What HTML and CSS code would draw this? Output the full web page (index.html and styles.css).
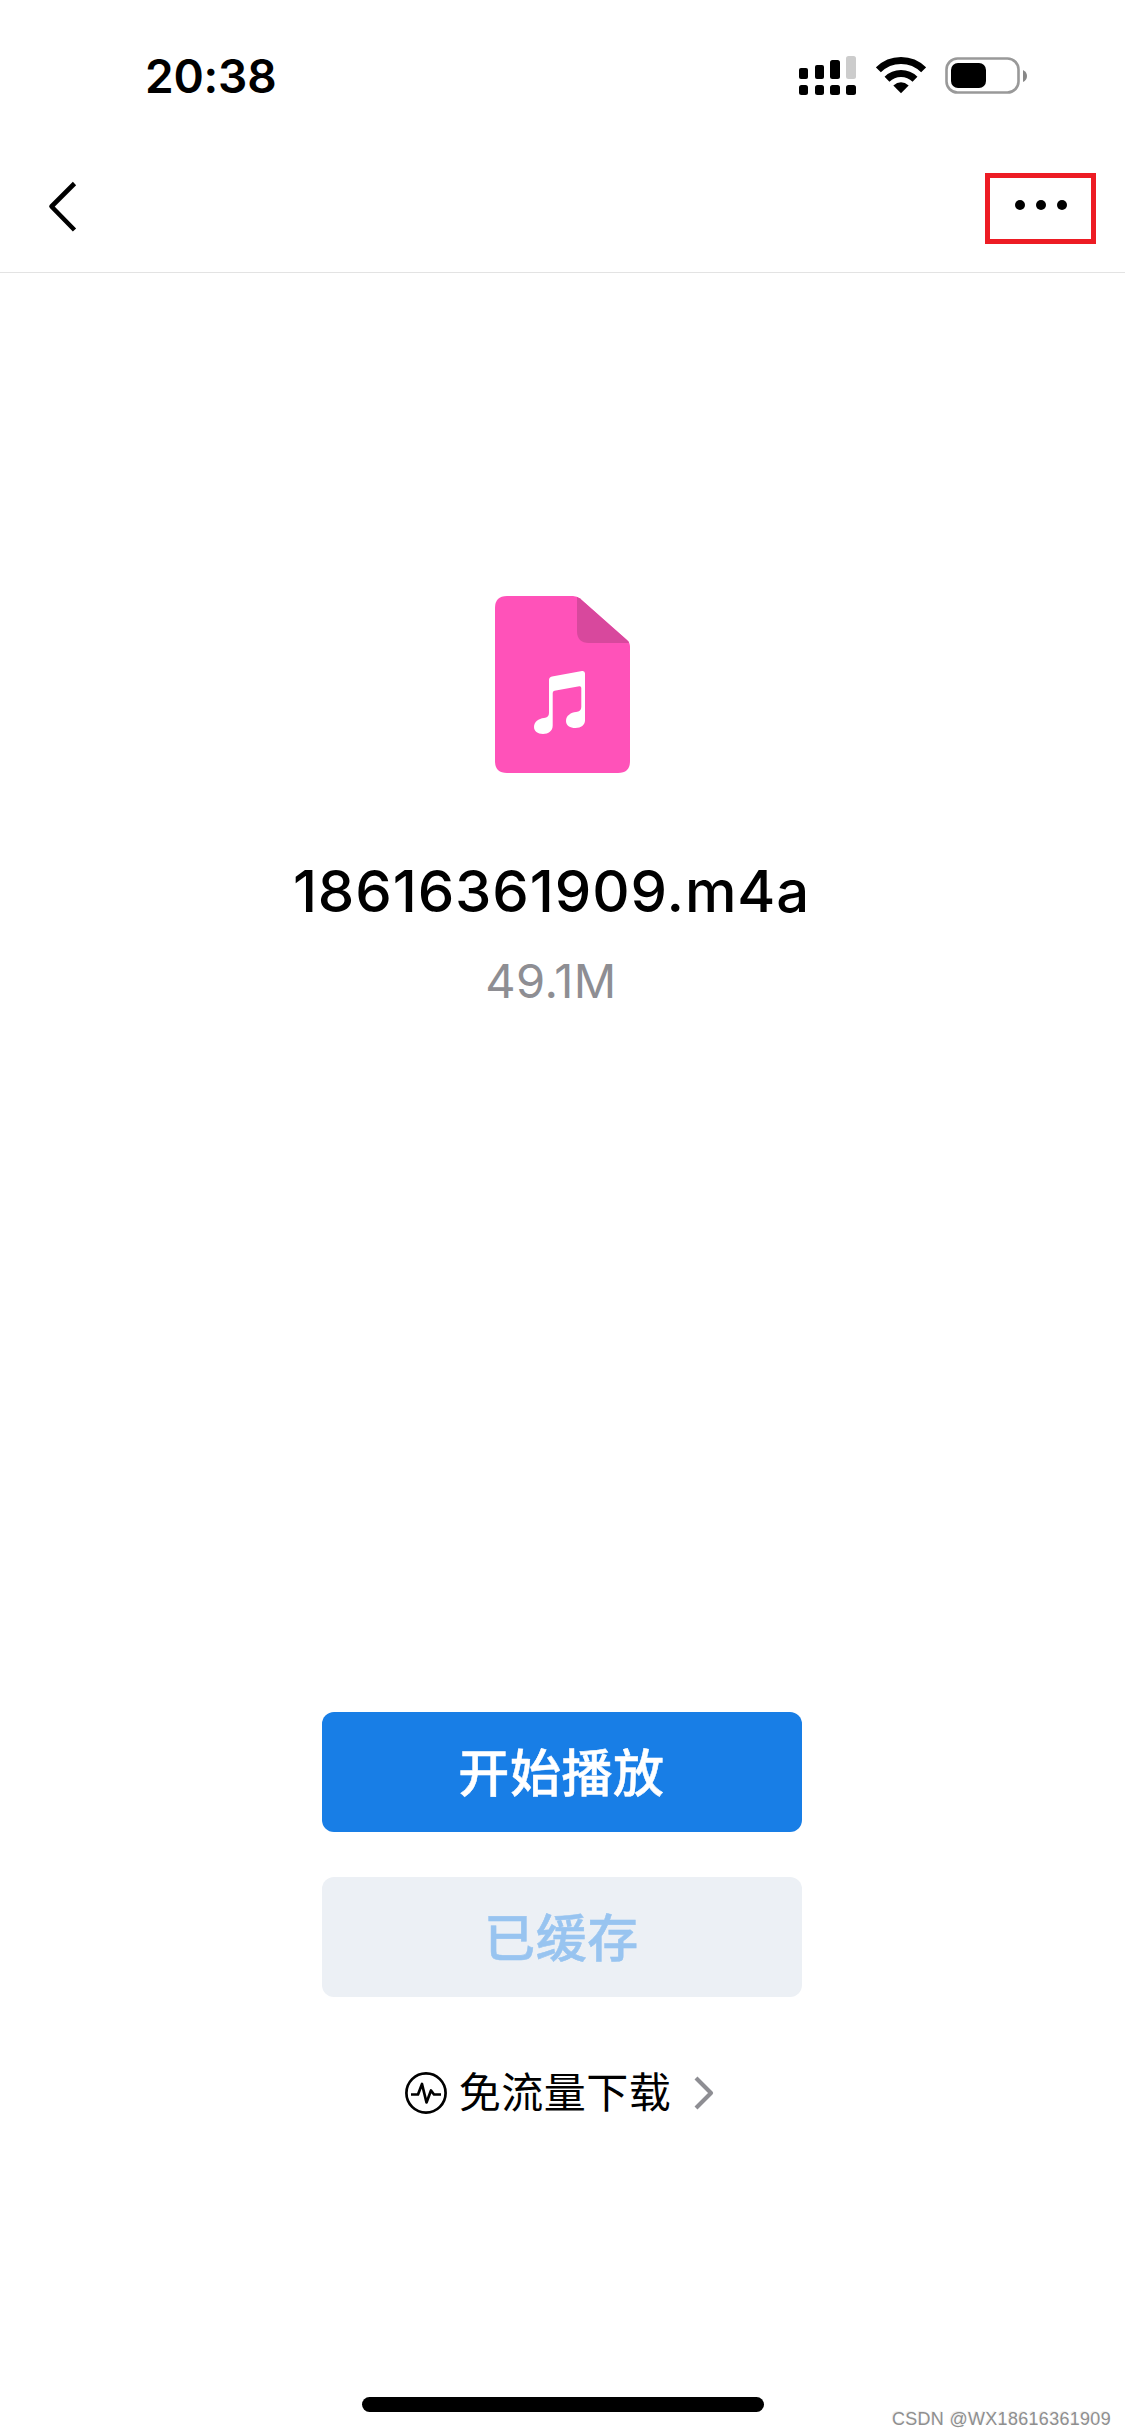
FILE: index.html
```html
<!DOCTYPE html>
<html lang="zh-CN">
<head>
<meta charset="UTF-8">
<meta name="viewport" content="width=device-width, initial-scale=1.0">
<title>18616361909.m4a</title>
<link rel="stylesheet" href="styles.css">
</head>
<body>
<div class="status-bar">
<span class="time">20:38</span>
<div class="status-icons">
<svg class="signal" width="57" height="40" viewBox="0 0 57 40">
<rect x="0" y="12" width="9" height="11" rx="2"/>
<rect x="16" y="9" width="9" height="14" rx="2"/>
<rect x="31" y="4" width="10" height="19" rx="2.5"/>
<rect x="47" y="0" width="10" height="23" rx="2.5" fill="#ccc"/>
<rect x="0" y="29" width="9" height="10" rx="2.5"/>
<rect x="16" y="29" width="9" height="10" rx="2.5"/>
<rect x="31" y="29" width="10" height="10" rx="2.5"/>
<rect x="47" y="29" width="10" height="10" rx="2.5"/>
</svg>
<svg class="wifi" width="50" height="40" viewBox="0 0 50 40">
<path d="M2.4 13.8a32 32 0 0 1 45.2 0" fill="none" stroke="#000" stroke-width="7"/>
<path d="M11 23.2a20 20 0 0 1 28 0" fill="none" stroke="#000" stroke-width="7"/>
<path d="M25 37.3L17.3 29.5Q25 23.2 32.7 29.5Z"/>
</svg>
<svg class="battery" width="83" height="40" viewBox="0 0 83 40">
<rect x="1.5" y="2.5" width="72" height="34" rx="11" fill="none" stroke="#999" stroke-width="2.6"/>
<rect x="6" y="7" width="35" height="25" rx="7"/>
<path d="M78 14q4 2 4 6t-4 6z" fill="#888"/>
</svg>
</div>
</div>

<div class="nav-bar">
<svg class="back" width="30" height="54" viewBox="0 0 30 54">
<path d="M26.5 3.5L3.5 26.5L26.5 50" fill="none" stroke="#000" stroke-width="4.6" stroke-linejoin="round"/>
</svg>
<div class="more">
<span class="dot"></span>
<span class="dot"></span>
<span class="dot"></span>
</div>
</div>

<div class="file">
<svg class="file-icon" width="135" height="177" viewBox="0 0 135 177">
<path d="M12 0H78Q82 0 85 2.6L132 44Q135 46.7 135 51V165Q135 177 123 177H12Q0 177 0 165V12Q0 0 12 0Z" fill="#ff52b9"/>
<path d="M82 1L85 2.6L133.5 45.5L134 47H94Q82 47 82 35Z" fill="#d8489d"/>
<path d="M57 80.5L87 75Q90 74.5 90 77.5V124.5C90 129 86 132 80.5 132C75 132 71 129.5 71 125C71 119.5 76 116.5 81 116Q86.3 115.5 86.3 111V92Q86.3 90 84.3 90.2L59.5 94.7Q57.7 95 57.7 97V129.5C57.7 135 53.5 138 48 138C42.5 138 39 135 39 131C39 126 43.5 122.5 49 122Q54 121.5 54 117V84Q54 81 57 80.5Z" fill="#fff"/>
</svg>
<h1 class="file-name">18616361909.m4a</h1>
<div class="file-size">49.1M</div>
</div>

<div class="actions">
<button class="btn play">开始播放</button>
<button class="btn cached" disabled>已缓存</button>
<a class="free-flow">
<svg width="42" height="42" viewBox="0 0 42 42" fill="none" stroke="#000">
<circle cx="21" cy="21" r="19.6" stroke-width="2.7"/>
<path d="M6 22.5H13L17 12L21.5 30.5L26 18.5L29 22.5H36" stroke-width="2.7" stroke-linejoin="round"/>
</svg>
<span class="free-flow-text">免流量下载</span>
<svg width="20" height="34" viewBox="0 0 20 34">
<path d="M2 2L17 17L2 32" fill="none" stroke="#8e8e93" stroke-width="4.2" stroke-linejoin="round"/>
</svg>
</a>
</div>

<div class="home-bar"></div>
<div class="watermark">CSDN @WX18616361909</div>
</body>
</html>
```
FILE: styles.css
```css
* {
box-sizing: border-box;
}
body {
font-family: Inter, "Noto Sans CJK SC", sans-serif;
display: flex;
flex-direction: column;
position: relative;
height: 2436px;
margin: 0;
background-color: #fff;
color: #000;
}
svg {
display: block;
flex: none;
}
.status-bar {
display: flex;
justify-content: space-between;
align-items: flex-start;
height: 141px;
padding: 48px 97px 0 145px;
}
.time {
font-size: 46px;
font-weight: 600;
line-height: 57px;
letter-spacing: -0.2px;
}
.status-icons {
display: flex;
padding-top: 8px;
}
.wifi {
margin-left: 20px;
}
.battery {
margin-left: 19px;
}
.nav-bar {
display: flex;
justify-content: space-between;
align-items: flex-start;
height: 132px;
padding: 32px 29px 0 48px;
border-bottom: 1px solid #e3e3e3;
}
.back {
margin-top: 7px;
}
.more {
display: flex;
justify-content: center;
gap: 11px;
width: 111px;
height: 71px;
padding-top: 22px;
border: 5px solid #ed1c24;
}
.dot {
width: 10px;
height: 10px;
border-radius: 50%;
background: #000;
}
.file {
display: flex;
flex-direction: column;
align-items: center;
padding-top: 323px;
}
.file-name {
margin: 83px 22px 0 0;
font-size: 58px;
font-weight: 500;
line-height: 70px;
letter-spacing: 0.9px;
}
.file-size {
margin: 27px 23px 0 0;
font-size: 47px;
line-height: 56px;
letter-spacing: 0.4px;
color: #8e8e93;
}
.actions {
display: flex;
flex-direction: column;
align-items: center;
gap: 45px;
margin: 703px 1px 0 0;
}
.btn {
width: 480px;
height: 120px;
padding: 4px 1px 0 0;
border: none;
border-radius: 12px;
font-family: inherit;
font-size: 51px;
font-weight: 500;
line-height: 116px;
letter-spacing: 0.6px;
-webkit-text-stroke: 0.5px currentColor;
}
.play {
background: #187ee6;
color: #fff;
}
.cached {
background: #ecf0f5;
color: #98c4f0;
}
.free-flow {
display: flex;
align-items: center;
margin-top: 21px;
margin-right: 5px;
}
.free-flow-text {
margin: 0 23px 0 12px;
font-size: 42px;
line-height: 60px;
letter-spacing: 0.5px;
}
.home-bar {
width: 402px;
height: 15px;
margin: auto auto 24px;
border-radius: 8px;
background: #000;
}
.watermark {
position: absolute;
right: 14px;
bottom: 5px;
font-family: "Liberation Sans", Arial, sans-serif;
font-size: 18px;
line-height: 24px;
letter-spacing: 0.3px;
color: #8f8f8f;
text-shadow: -1px -1px 0 #eee;
}
```
